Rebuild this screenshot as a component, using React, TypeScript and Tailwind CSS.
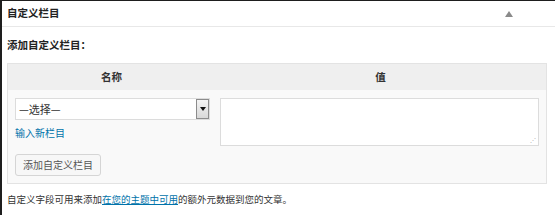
import React from 'react';

const App: React.FC = () => {
  return (
    <div
      className="w-[555px] h-[215px] bg-white border-t border-t-[#1e1e1e] border-l-2 border-l-[#1e1e1e] text-[#333] overflow-hidden"
      style={{ fontFamily: '"Noto Sans CJK SC", "Liberation Sans", sans-serif' }}
    >
      {/* header */}
      <div className="h-[26px] flex items-center justify-between pl-[5px] pr-[42px] border-b border-[#e8e8e8]">
        <h2 className="text-[10.5px] font-bold text-[#222] leading-none">自定义栏目</h2>
        <span className="w-0 h-0 border-l-[4px] border-r-[4px] border-b-[6px] border-l-transparent border-r-transparent border-b-[#8a8a8a]" />
      </div>

      <div className="pl-[5px] pr-[8px]">
        <p className="h-[11px] text-[10.5px] font-bold text-[#222] leading-none mt-[13px] mb-[12px]">添加自定义栏目：</p>

        {/* table */}
        <div className="border border-[#e3e3e3] bg-[#f9f9f9]">
          <div className="grid grid-cols-[207px_1fr] h-[26px] bg-[#efefef] text-[10.5px] font-bold text-[#333]">
            <div className="flex items-center justify-center">名称</div>
            <div className="flex items-center justify-center">值</div>
          </div>
          <div className="grid grid-cols-[207px_1fr] pt-[8px]">
            <div className="pl-[7px] pr-[5px]">
              <div className="flex h-[22px] border border-[#dcdcdc] bg-white">
                <span className="flex-1 flex items-center pl-[3px] text-[11px] text-[#333]">—选择—</span>
                <span className="w-[13px] border border-[#8c8c8c] bg-gradient-to-b from-[#f4f4f4] to-[#d8d8d8] flex items-center justify-center">
                  <span className="w-0 h-0 border-l-[3px] border-r-[3px] border-t-[4px] border-l-transparent border-r-transparent border-t-[#111]" />
                </span>
              </div>
              <a href="#" className="block mt-[8px] text-[10px] leading-none text-[#0073aa]">输入新栏目</a>
            </div>
            <div className="pl-[5px] pr-[7px]">
              <div className="relative h-[48px] border border-[#dcdcdc] bg-white">
                <span className="absolute right-[2px] bottom-[2px] text-[6px] leading-none text-[#aaa]">⋰</span>
              </div>
            </div>
          </div>
          <div className="flex pl-[7px] pt-[8px] pb-[7px]">
            <button className="h-[22px] px-[7px] border border-[#d5d5d5] rounded-[3px] bg-[#f7f7f7] text-[10px] text-[#555] leading-none">
              添加自定义栏目
            </button>
          </div>
        </div>

        <p className="mt-[11px] text-[9.5px] leading-none text-[#333]">
          自定义字段可用来添加<a href="#" className="text-[#0073aa] underline">在您的主题中可用</a>的额外元数据到您的文章。
        </p>
      </div>
    </div>
  );
};

export default App;
